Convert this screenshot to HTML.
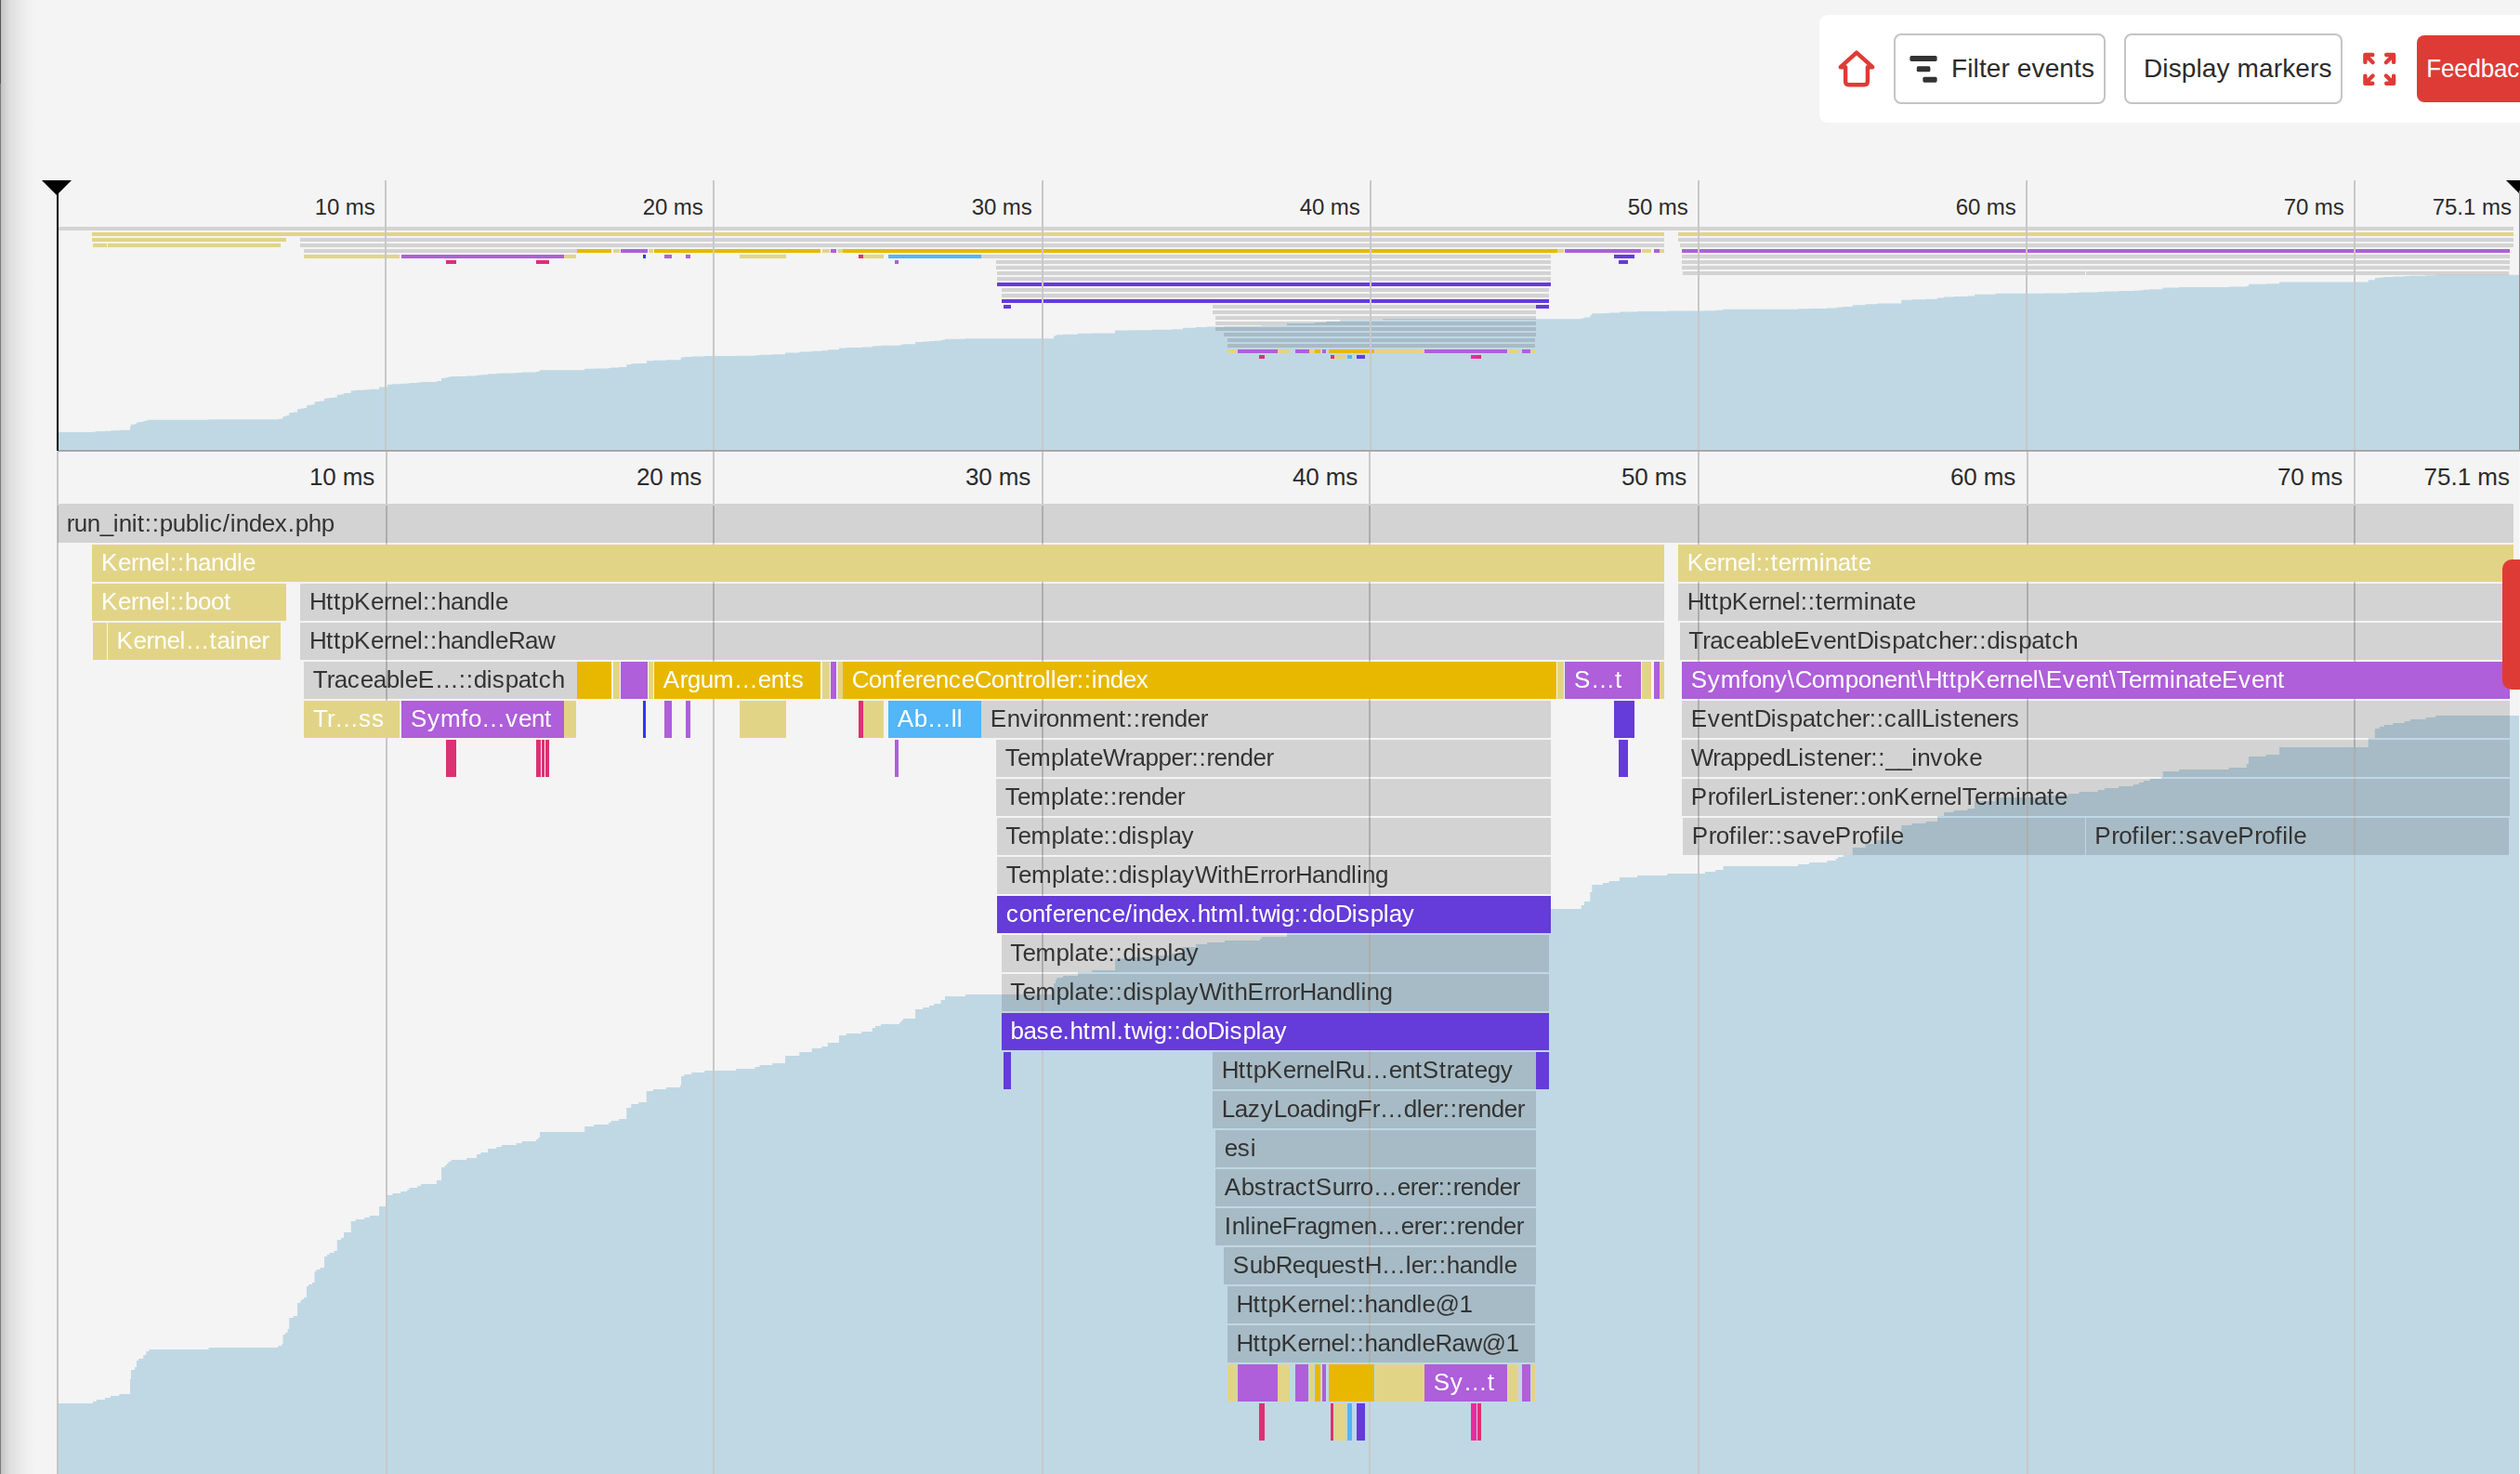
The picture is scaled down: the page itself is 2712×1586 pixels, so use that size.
<!DOCTYPE html>
<html lang="en"><head><meta charset="utf-8"><title>Timeline</title>
<style>
html,body{margin:0;padding:0}
body{width:2712px;height:1586px;overflow:hidden;background:#f4f4f4;position:relative;font-family:"Liberation Sans",sans-serif;color:#2f2f2f}
.a{position:absolute}
svg{position:absolute;left:0;top:0;overflow:hidden}
.b{position:absolute;height:40px}
.g{background:rgba(0,0,0,0.132)}
.ylw{background:#e2d487}.ylwf{background:rgba(226,212,135,.5)}.org{background:#e8b800}.pur{background:#ae5fd9}.ind{background:#653bd9}
.sky{background:#52b6f8}.pink{background:#dc3173}.mag{background:#f028a0}.blue{background:#2a3cf0}
.o{position:absolute;height:4px}
.gl{position:absolute;width:2px;background:#c8c8c8}
.t1{position:absolute;font-size:24px;line-height:28px;text-align:right;width:200px;top:209px;color:#2b2b2b}
.t2{position:absolute;font-size:26px;line-height:30px;text-align:right;width:200px;top:497.75px;color:#2b2b2b}
.btn{position:absolute;top:36px;height:76px;box-sizing:border-box;border:2px solid #c4c4c4;border-radius:8px;background:#fff;font-size:28px;line-height:72.6px;color:#2b2b2b;white-space:nowrap;letter-spacing:.12px}

</style></head><body>
<div class="a" style="left:0;top:0;width:42px;height:1586px;background:linear-gradient(to right,rgba(0,0,0,.21) 0,rgba(0,0,0,.16) 4px,rgba(0,0,0,.095) 10px,rgba(0,0,0,.05) 20px,rgba(0,0,0,.017) 30px,rgba(0,0,0,0) 40px)"></div>
<div class="a" style="left:0;top:0;width:1.3px;height:90px;background:#555"></div>
<div class="a" style="left:0;top:90px;width:1.3px;height:1496px;background:#7c7c7c"></div>
<svg width="2712" height="1586" viewBox="0 0 2712 1586">
<path fill="#c0d8e4" d="M63,484.5L63,465L100,465L100,464.54L103.75,464.54L103.75,464.09L113,464.09L113,463.63L119,463.63L119,463.17L128.25,463.17L128.25,462.71L140,462.71L140,459.05L141,459.05L141,456.77L145,456.77L145,456.08L147,456.08L147,454.48L149,454.48L149,454.02L154.25,454.02L154.25,453.11L157.25,453.11L157.25,452.19L160.25,452.19L160.25,451.73L224.5,451.73L224.5,451.28L299.25,451.28L299.25,450.82L303.25,450.82L303.25,450.36L304.5,450.36L304.5,448.07L307,448.07L307,447.62L309.5,447.62L309.5,446.7L311.25,446.7L311.25,443.96L315.5,443.96L315.5,443.5L320,443.5L320,440.3L323,440.3L323,439.84L324.5,439.84L324.5,439.38L327.25,439.38L327.25,438.92L330,438.92L330,436.18L332,436.18L332,435.72L336,435.72L336,435.27L338.5,435.27L338.5,432.52L340.5,432.52L340.5,432.06L344.5,432.06L344.5,431.61L349,431.61L349,428.86L352,428.86L352,428.4L354.5,428.4L354.5,427.95L359.5,427.95L359.5,427.49L362.75,427.49L362.75,424.74L367,424.74L367,424.29L370,424.29L370,422.91L377.75,422.91L377.75,420.17L382.75,420.17L382.75,419.71L392.25,419.71L392.25,419.25L397.75,419.25L397.75,418.8L408,418.8L408,416.51L417,416.51L417,413.76L422.5,413.76L422.5,413.31L431.25,413.31L431.25,412.85L438.25,412.85L438.25,412.39L440.5,412.39L440.5,411.94L449.25,411.94L449.25,411.48L453.25,411.48L453.25,411.02L470,411.02L470,410.11L475,410.11L475,406.9L478.75,406.9L478.75,406.45L480.75,406.45L480.75,405.99L482.5,405.99L482.5,405.53L485.5,405.53L485.5,405.07L502,405.07L502,404.62L513,404.62L513,403.7L517.5,403.7L517.5,403.24L525,403.24L525,402.33L534.25,402.33L534.25,401.87L540,401.87L540,401.41L555.75,401.41L555.75,400.96L561.75,400.96L561.75,400.5L577,400.5L577,400.04L579,400.04L579,399.58L581,399.58L581,398.21L629.25,398.21L629.25,396.84L639.25,396.84L639.25,396.38L655,396.38L655,395.92L657.5,395.92L657.5,395.47L666.25,395.47L666.25,395.01L674.25,395.01L674.25,392.26L679.25,392.26L679.25,391.35L687.25,391.35L687.25,390.89L695.75,390.89L695.75,388.15L703,388.15L703,387.69L717,387.69L717,387.23L732,387.23L732,386.77L733,386.77L733,384.49L736.25,384.49L736.25,384.03L744.25,384.03L744.25,383.57L758.25,383.57L758.25,383.12L792.25,383.12L792.25,382.66L812.5,382.66L812.5,382.2L817.5,382.2L817.5,381.74L831.25,381.74L831.25,381.29L845,381.29L845,379.46L860.25,379.46L860.25,378.54L873.75,378.54L873.75,377.63L884.25,377.63L884.25,377.17L890.75,377.17L890.75,376.25L903,376.25L903,374.42L910.75,374.42L910.75,373.97L927.25,373.97L927.25,373.51L938.75,373.51L938.75,372.59L942,372.59L942,372.14L948,372.14L948,371.68L968,371.68L968,371.22L970,371.22L970,370.76L972,370.76L972,370.31L985,370.31L985,368.02L993.25,368.02L993.25,367.56L1000,367.56L1000,367.1L1005,367.1L1005,366.65L1012.5,366.65L1012.5,365.73L1017,365.73L1017,364.82L1039,364.82L1039,364.36L1134,364.36L1134,361.61L1136,361.61L1136,360.7L1137.5,360.7L1137.5,360.24L1144,360.24L1144,359.78L1160,359.78L1160,358.87L1175,358.87L1175,358.41L1200,358.41L1200,355.55L1215,355.55L1215,355.21L1240,355.21L1240,354.75L1261,354.75L1261,354.3L1273,354.3L1273,352.69L1287,352.69L1287,352.01L1299,352.01L1299,351.55L1318,351.55L1318,351.09L1356,351.09L1356,350.64L1358,350.64L1358,350.18L1385,350.18L1385,348.12L1415,348.12L1415,346.98L1427,346.98L1427,345.83L1442,345.83L1442,344.23L1488,344.23L1488,343.32L1701.75,343.32L1701.75,342.4L1705,342.4L1705,341.49L1711.25,341.49L1711.25,339.2L1713.25,339.2L1713.25,337.37L1725,337.37L1725,336.91L1731.75,336.91L1731.75,336.45L1743,336.45L1743,335.54L1762,335.54L1762,335.08L1794.25,335.08L1794.25,334.62L1835,334.62L1835,334.17L1846.25,334.17L1846.25,333.71L1854.5,333.71L1854.5,332.8L1935,332.8L1935,332.34L1947,332.34L1947,331.88L1966.25,331.88L1966.25,331.42L1975.5,331.42L1975.5,330.97L1978,330.97L1978,330.51L1983.75,330.51L1983.75,330.05L1993.75,330.05L1993.75,328.22L2007.5,328.22L2007.5,327.31L2020,327.31L2020,326.39L2046.25,326.39L2046.25,322.73L2057.5,322.73L2057.5,322.27L2072.5,322.27L2072.5,321.82L2085,321.82L2085,320.44L2092,320.44L2092,319.53L2102.5,319.53L2102.5,319.07L2117.5,319.07L2117.5,318.61L2125,318.61L2125,316.78L2147.5,316.78L2147.5,315.87L2200,315.87L2200,315.41L2226,315.41L2226,314.95L2237.5,314.95L2237.5,314.5L2257.5,314.5L2257.5,314.04L2265,314.04L2265,313.58L2280,313.58L2280,313.12L2296,313.12L2296,312.67L2302,312.67L2302,312.21L2307,312.21L2307,311.75L2313.7,311.75L2313.7,311.29L2326,311.29L2326,310.84L2327.8,310.84L2327.8,309.46L2345,309.46L2345,309.01L2398.7,309.01L2398.7,308.55L2417.8,308.55L2417.8,307.63L2420,307.63L2420,305.81L2438.7,305.81L2438.7,305.35L2453,305.35L2453,303.52L2548.7,303.52L2548.7,301.23L2555.8,301.23L2555.8,298.94L2560.7,298.94L2560.7,298.49L2565.8,298.49L2565.8,298.03L2575.3,298.03L2575.3,297.57L2587.8,297.57L2587.8,297.11L2594,297.11L2594,296.66L2610.7,296.66L2610.7,296.2L2621.2,296.2L2621.2,295.74L2711,295.74L2711,484.5Z"/>
<path fill="#c0d8e4" d="M63,1600L63,1510L100,1510L100,1508L103.75,1508L103.75,1506L113,1506L113,1504L119,1504L119,1502L128.25,1502L128.25,1500L140,1500L140,1484L141,1484L141,1474L145,1474L145,1471L147,1471L147,1464L149,1464L149,1462L154.25,1462L154.25,1458L157.25,1458L157.25,1454L160.25,1454L160.25,1452L224.5,1452L224.5,1450L299.25,1450L299.25,1448L303.25,1448L303.25,1446L304.5,1446L304.5,1436L307,1436L307,1434L309.5,1434L309.5,1430L311.25,1430L311.25,1418L315.5,1418L315.5,1416L320,1416L320,1402L323,1402L323,1400L324.5,1400L324.5,1398L327.25,1398L327.25,1396L330,1396L330,1384L332,1384L332,1382L336,1382L336,1380L338.5,1380L338.5,1368L340.5,1368L340.5,1366L344.5,1366L344.5,1364L349,1364L349,1352L352,1352L352,1350L354.5,1350L354.5,1348L359.5,1348L359.5,1346L362.75,1346L362.75,1334L367,1334L367,1332L370,1332L370,1326L377.75,1326L377.75,1314L382.75,1314L382.75,1312L392.25,1312L392.25,1310L397.75,1310L397.75,1308L408,1308L408,1298L417,1298L417,1286L422.5,1286L422.5,1284L431.25,1284L431.25,1282L438.25,1282L438.25,1280L440.5,1280L440.5,1278L449.25,1278L449.25,1276L453.25,1276L453.25,1274L470,1274L470,1270L475,1270L475,1256L478.75,1256L478.75,1254L480.75,1254L480.75,1252L482.5,1252L482.5,1250L485.5,1250L485.5,1248L502,1248L502,1246L513,1246L513,1242L517.5,1242L517.5,1240L525,1240L525,1236L534.25,1236L534.25,1234L540,1234L540,1232L555.75,1232L555.75,1230L561.75,1230L561.75,1228L577,1228L577,1226L579,1226L579,1224L581,1224L581,1218L629.25,1218L629.25,1212L639.25,1212L639.25,1210L655,1210L655,1208L657.5,1208L657.5,1206L666.25,1206L666.25,1204L674.25,1204L674.25,1192L679.25,1192L679.25,1188L687.25,1188L687.25,1186L695.75,1186L695.75,1174L703,1174L703,1172L717,1172L717,1170L732,1170L732,1168L733,1168L733,1158L736.25,1158L736.25,1156L744.25,1156L744.25,1154L758.25,1154L758.25,1152L792.25,1152L792.25,1150L812.5,1150L812.5,1148L817.5,1148L817.5,1146L831.25,1146L831.25,1144L845,1144L845,1136L860.25,1136L860.25,1132L873.75,1132L873.75,1128L884.25,1128L884.25,1126L890.75,1126L890.75,1122L903,1122L903,1114L910.75,1114L910.75,1112L927.25,1112L927.25,1110L938.75,1110L938.75,1106L942,1106L942,1104L948,1104L948,1102L968,1102L968,1100L970,1100L970,1098L972,1098L972,1096L985,1096L985,1086L993.25,1086L993.25,1084L1000,1084L1000,1082L1005,1082L1005,1080L1012.5,1080L1012.5,1076L1017,1076L1017,1072L1039,1072L1039,1070L1134,1070L1134,1058L1136,1058L1136,1054L1137.5,1054L1137.5,1052L1144,1052L1144,1050L1160,1050L1160,1046L1175,1046L1175,1044L1200,1044L1200,1031.5L1215,1031.5L1215,1030L1240,1030L1240,1028L1261,1028L1261,1026L1273,1026L1273,1019L1287,1019L1287,1016L1299,1016L1299,1014L1318,1014L1318,1012L1356,1012L1356,1010L1358,1010L1358,1008L1385,1008L1385,999L1415,999L1415,994L1427,994L1427,989L1442,989L1442,982L1488,982L1488,978L1701.75,978L1701.75,974L1705,974L1705,970L1711.25,970L1711.25,960L1713.25,960L1713.25,952L1725,952L1725,950L1731.75,950L1731.75,948L1743,948L1743,944L1762,944L1762,942L1794.25,942L1794.25,940L1835,940L1835,938L1846.25,938L1846.25,936L1854.5,936L1854.5,932L1935,932L1935,930L1947,930L1947,928L1966.25,928L1966.25,926L1975.5,926L1975.5,924L1978,924L1978,922L1983.75,922L1983.75,920L1993.75,920L1993.75,912L2007.5,912L2007.5,908L2020,908L2020,904L2046.25,904L2046.25,888L2057.5,888L2057.5,886L2072.5,886L2072.5,884L2085,884L2085,878L2092,878L2092,874L2102.5,874L2102.5,872L2117.5,872L2117.5,870L2125,870L2125,862L2147.5,862L2147.5,858L2200,858L2200,856L2226,856L2226,854L2237.5,854L2237.5,852L2257.5,852L2257.5,850L2265,850L2265,848L2280,848L2280,846L2296,846L2296,844L2302,844L2302,842L2307,842L2307,840L2313.7,840L2313.7,838L2326,838L2326,836L2327.8,836L2327.8,830L2345,830L2345,828L2398.7,828L2398.7,826L2417.8,826L2417.8,822L2420,822L2420,814L2438.7,814L2438.7,812L2453,812L2453,804L2548.7,804L2548.7,794L2555.8,794L2555.8,784L2560.7,784L2560.7,782L2565.8,782L2565.8,780L2575.3,780L2575.3,778L2587.8,778L2587.8,776L2594,776L2594,774L2610.7,774L2610.7,772L2621.2,772L2621.2,770L2711,770L2711,1600Z"/>
</svg>
<div class="gl" style="left:415px;top:486px;height:1100px"></div>
<div class="gl" style="left:767px;top:486px;height:1100px"></div>
<div class="gl" style="left:1121px;top:486px;height:1100px"></div>
<div class="gl" style="left:1473px;top:486px;height:1100px"></div>
<div class="gl" style="left:1827px;top:486px;height:1100px"></div>
<div class="gl" style="left:2181px;top:486px;height:1100px"></div>
<div class="gl" style="left:2533px;top:486px;height:1100px"></div>
<div class="gl" style="left:61px;top:486px;height:1100px;background:#c6c6c6"></div>
<div class="o g" style="left:62px;top:244px;width:2642.5px"></div>
<div class="o ylw" style="left:99.25px;top:250px;width:1691.25px"></div>
<div class="o ylw" style="left:1806px;top:250px;width:898.5px"></div>
<div class="o ylw" style="left:99.25px;top:256px;width:208.75px"></div>
<div class="o g" style="left:323.25px;top:256px;width:1467.25px"></div>
<div class="o g" style="left:1806px;top:256px;width:898.5px"></div>
<div class="o ylw" style="left:99.5px;top:262px;width:15.5px"></div>
<div class="o ylw" style="left:115.75px;top:262px;width:186.25px"></div>
<div class="o g" style="left:323.25px;top:262px;width:1467.25px"></div>
<div class="o g" style="left:1807.5px;top:262px;width:897px"></div>
<div class="o g" style="left:327px;top:268px;width:293.5px"></div>
<div class="o org" style="left:621px;top:268px;width:36.75px"></div>
<div class="o ylw" style="left:660px;top:268px;width:7px"></div>
<div class="o pur" style="left:668px;top:268px;width:29.25px"></div>
<div class="o ylw" style="left:698px;top:268px;width:5.1px"></div>
<div class="o org" style="left:704px;top:268px;width:178.75px"></div>
<div class="o ylw" style="left:885px;top:268px;width:8px"></div>
<div class="o pur" style="left:894.25px;top:268px;width:5.75px"></div>
<div class="o ylwf" style="left:900.75px;top:268px;width:1.25px"></div>
<div class="o ylw" style="left:902px;top:268px;width:5px"></div>
<div class="o org" style="left:907px;top:268px;width:768.5px"></div>
<div class="o ylw" style="left:1675.5px;top:268px;width:7.5px"></div>
<div class="o pur" style="left:1684.25px;top:268px;width:81.5px"></div>
<div class="o ylw" style="left:1767px;top:268px;width:10px"></div>
<div class="o pur" style="left:1780px;top:268px;width:6.25px"></div>
<div class="o ylw" style="left:1786.25px;top:268px;width:4.25px"></div>
<div class="o pur" style="left:1810px;top:268px;width:890.75px"></div>
<div class="o ylw" style="left:327.25px;top:274px;width:102.75px"></div>
<div class="o pur" style="left:432.25px;top:274px;width:175px"></div>
<div class="o ylw" style="left:607.25px;top:274px;width:13px"></div>
<div class="o blue" style="left:691.5px;top:274px;width:3.5px"></div>
<div class="o pur" style="left:715px;top:274px;width:8px"></div>
<div class="o pur" style="left:737.75px;top:274px;width:5.25px"></div>
<div class="o ylw" style="left:796.25px;top:274px;width:49.75px"></div>
<div class="o pink" style="left:924.25px;top:274px;width:4.75px"></div>
<div class="o ylw" style="left:929px;top:274px;width:21.5px"></div>
<div class="o sky" style="left:956px;top:274px;width:99.75px"></div>
<div class="o g" style="left:1056px;top:274px;width:612.75px"></div>
<div class="o ind" style="left:1737px;top:274px;width:22px"></div>
<div class="o g" style="left:1810px;top:274px;width:890.75px"></div>
<div class="o pink" style="left:480px;top:280px;width:10.75px"></div>
<div class="o pink" style="left:577px;top:280px;width:5.5px"></div>
<div class="o pink" style="left:582.5px;top:280px;width:4px"></div>
<div class="o pink" style="left:586.5px;top:280px;width:4.5px"></div>
<div class="o pur" style="left:963px;top:280px;width:4px"></div>
<div class="o g" style="left:1072px;top:280px;width:596.75px"></div>
<div class="o ind" style="left:1742px;top:280px;width:9.75px"></div>
<div class="o g" style="left:1810px;top:280px;width:890.75px"></div>
<div class="o g" style="left:1072px;top:286px;width:596.75px"></div>
<div class="o g" style="left:1810px;top:286px;width:890.75px"></div>
<div class="o g" style="left:1072.5px;top:292px;width:596.25px"></div>
<div class="o g" style="left:1811px;top:292px;width:433px"></div>
<div class="o g" style="left:2244.5px;top:292px;width:455.5px"></div>
<div class="o g" style="left:1073px;top:298px;width:595.5px"></div>
<div class="o ind" style="left:1073px;top:304px;width:595.5px"></div>
<div class="o g" style="left:1077.5px;top:310px;width:589.5px"></div>
<div class="o g" style="left:1077.5px;top:316px;width:589.5px"></div>
<div class="o ind" style="left:1077.75px;top:322px;width:589.25px"></div>
<div class="o ind" style="left:1080px;top:328px;width:8.25px"></div>
<div class="o g" style="left:1305px;top:328px;width:348.25px"></div>
<div class="o ind" style="left:1653.25px;top:328px;width:9.15px"></div>
<div class="o ind" style="left:1662.4px;top:328px;width:4.35px"></div>
<div class="o g" style="left:1305px;top:334px;width:347.75px"></div>
<div class="o g" style="left:1308px;top:340px;width:344.75px"></div>
<div class="o g" style="left:1308px;top:346px;width:344.5px"></div>
<div class="o g" style="left:1308px;top:352px;width:344.5px"></div>
<div class="o g" style="left:1317px;top:358px;width:335.5px"></div>
<div class="o g" style="left:1320.75px;top:364px;width:331.5px"></div>
<div class="o g" style="left:1320.75px;top:370px;width:331.5px"></div>
<div class="o ylw" style="left:1321.25px;top:376px;width:10px"></div>
<div class="o pur" style="left:1332px;top:376px;width:43.25px"></div>
<div class="o ylw" style="left:1375.25px;top:376px;width:13px"></div>
<div class="o pur" style="left:1394px;top:376px;width:14.5px"></div>
<div class="o ylw" style="left:1408.5px;top:376px;width:6px"></div>
<div class="o org" style="left:1414.5px;top:376px;width:6px"></div>
<div class="o pur" style="left:1422.75px;top:376px;width:4px"></div>
<div class="o org" style="left:1430px;top:376px;width:48.5px"></div>
<div class="o ylw" style="left:1480px;top:376px;width:52.5px"></div>
<div class="o pur" style="left:1533px;top:376px;width:88.75px"></div>
<div class="o ylw" style="left:1623px;top:376px;width:10.5px"></div>
<div class="o pur" style="left:1638px;top:376px;width:8.75px"></div>
<div class="o ylw" style="left:1647.5px;top:376px;width:4.75px"></div>
<div class="o pink" style="left:1355px;top:382px;width:5.5px"></div>
<div class="o pink" style="left:1432px;top:382px;width:3.5px"></div>
<div class="o ylw" style="left:1435.5px;top:382px;width:13.5px"></div>
<div class="o sky" style="left:1450px;top:382px;width:5px"></div>
<div class="o ind" style="left:1460px;top:382px;width:8.75px"></div>
<div class="o mag" style="left:1582.75px;top:382px;width:6.75px"></div>
<div class="o pink" style="left:1589.5px;top:382px;width:4.5px"></div>
<div class="gl" style="left:414px;top:194px;height:292px"></div>
<div class="gl" style="left:767px;top:194px;height:292px"></div>
<div class="gl" style="left:1121px;top:194px;height:292px"></div>
<div class="gl" style="left:1474px;top:194px;height:292px"></div>
<div class="gl" style="left:1827px;top:194px;height:292px"></div>
<div class="gl" style="left:2180px;top:194px;height:292px"></div>
<div class="gl" style="left:2533px;top:194px;height:292px"></div>
<div class="a" style="left:62px;top:484px;width:2650px;height:2px;background:#a9a7a7"></div>
<div class="a" style="left:61px;top:200px;width:2px;height:285px;background:#000"></div>
<svg width="2712" height="1586" viewBox="0 0 2712 1586"><path d="M45,194H77L61,210Z" fill="#000"/><path d="M2697,194H2729L2713,210Z" fill="#000"/><rect x="2711" y="205" width="1" height="279" fill="#8a8a8a"/></svg>
<div class="t1" style="left:203.7px;letter-spacing:-0.07px">10 ms</div>
<div class="t2" style="left:203px;letter-spacing:-0.16px">10 ms</div>
<div class="t1" style="left:556.7px;letter-spacing:-0.07px">20 ms</div>
<div class="t2" style="left:555px;letter-spacing:-0.16px">20 ms</div>
<div class="t1" style="left:910.7px;letter-spacing:-0.07px">30 ms</div>
<div class="t2" style="left:909px;letter-spacing:-0.16px">30 ms</div>
<div class="t1" style="left:1263.7px;letter-spacing:-0.07px">40 ms</div>
<div class="t2" style="left:1261px;letter-spacing:-0.16px">40 ms</div>
<div class="t1" style="left:1616.7px;letter-spacing:-0.07px">50 ms</div>
<div class="t2" style="left:1615px;letter-spacing:-0.16px">50 ms</div>
<div class="t1" style="left:1969.7px;letter-spacing:-0.07px">60 ms</div>
<div class="t2" style="left:1969px;letter-spacing:-0.16px">60 ms</div>
<div class="t1" style="left:2322.7px;letter-spacing:-0.07px">70 ms</div>
<div class="t2" style="left:2321px;letter-spacing:-0.16px">70 ms</div>
<div class="t1" style="left:2503px">75.1 ms</div>
<div class="t2" style="left:2501px">75.1 ms</div>
<div class="a" style="left:62px;top:542px;width:2642.5px;height:2px;background:#d3d3d3"></div>
<div class="a" style="left:0;top:0;width:2712px;height:1586px;will-change:transform">
<div class="b g" style="left:62px;top:544px;width:2642.5px"></div>
<div class="b ylw" style="left:99.25px;top:586px;width:1691.25px"></div>
<div class="b ylw" style="left:1806px;top:586px;width:898.5px"></div>
<div class="b ylw" style="left:99.25px;top:628px;width:208.75px"></div>
<div class="b g" style="left:323.25px;top:628px;width:1467.25px"></div>
<div class="b g" style="left:1806px;top:628px;width:898.5px"></div>
<div class="b ylw" style="left:99.5px;top:670px;width:15.5px"></div>
<div class="b ylw" style="left:115.75px;top:670px;width:186.25px"></div>
<div class="b g" style="left:323.25px;top:670px;width:1467.25px"></div>
<div class="b g" style="left:1807.5px;top:670px;width:897px"></div>
<div class="b g" style="left:327px;top:712px;width:293.5px"></div>
<div class="b org" style="left:621px;top:712px;width:36.75px"></div>
<div class="b ylw" style="left:660px;top:712px;width:7px"></div>
<div class="b pur" style="left:668px;top:712px;width:29.25px"></div>
<div class="b ylw" style="left:698px;top:712px;width:5.1px"></div>
<div class="b org" style="left:704px;top:712px;width:178.75px"></div>
<div class="b ylw" style="left:885px;top:712px;width:8px"></div>
<div class="b pur" style="left:894.25px;top:712px;width:5.75px"></div>
<div class="b ylwf" style="left:900.75px;top:712px;width:0.85px"></div>
<div class="b ylw" style="left:902px;top:712px;width:4.8px"></div>
<div class="b org" style="left:907px;top:712px;width:768px"></div>
<div class="b ylw" style="left:1675.5px;top:712px;width:7.5px"></div>
<div class="b pur" style="left:1684.25px;top:712px;width:81.5px"></div>
<div class="b ylw" style="left:1767px;top:712px;width:10px"></div>
<div class="b pur" style="left:1780px;top:712px;width:5.75px"></div>
<div class="b ylw" style="left:1786.25px;top:712px;width:4.25px"></div>
<div class="b pur" style="left:1810px;top:712px;width:890.75px"></div>
<div class="b ylw" style="left:327.25px;top:754px;width:102.75px"></div>
<div class="b pur" style="left:432.25px;top:754px;width:174.5px"></div>
<div class="b ylw" style="left:607.25px;top:754px;width:13px"></div>
<div class="b blue" style="left:691.5px;top:754px;width:3.5px"></div>
<div class="b pur" style="left:715px;top:754px;width:8px"></div>
<div class="b pur" style="left:737.75px;top:754px;width:5.25px"></div>
<div class="b ylw" style="left:796.25px;top:754px;width:49.75px"></div>
<div class="b pink" style="left:924.25px;top:754px;width:4.65px"></div>
<div class="b ylw" style="left:929px;top:754px;width:21.5px"></div>
<div class="b sky" style="left:956px;top:754px;width:99.75px"></div>
<div class="b g" style="left:1056px;top:754px;width:612.75px"></div>
<div class="b ind" style="left:1737px;top:754px;width:22px"></div>
<div class="b g" style="left:1810px;top:754px;width:890.75px"></div>
<div class="b pink" style="left:480px;top:796px;width:10.75px"></div>
<div class="b pink" style="left:577px;top:796px;width:5px"></div>
<div class="b pink" style="left:582.5px;top:796px;width:3.5px"></div>
<div class="b pink" style="left:586.5px;top:796px;width:4.5px"></div>
<div class="b pur" style="left:963px;top:796px;width:4px"></div>
<div class="b g" style="left:1072px;top:796px;width:596.75px"></div>
<div class="b ind" style="left:1742px;top:796px;width:9.75px"></div>
<div class="b g" style="left:1810px;top:796px;width:890.75px"></div>
<div class="b g" style="left:1072px;top:838px;width:596.75px"></div>
<div class="b g" style="left:1810px;top:838px;width:890.75px"></div>
<div class="b g" style="left:1072.5px;top:880px;width:596.25px"></div>
<div class="b g" style="left:1811px;top:880px;width:433px"></div>
<div class="b g" style="left:2244.5px;top:880px;width:455.5px"></div>
<div class="b g" style="left:1073px;top:922px;width:595.5px"></div>
<div class="b ind" style="left:1073px;top:964px;width:595.5px"></div>
<div class="b g" style="left:1077.5px;top:1006px;width:589.5px"></div>
<div class="b g" style="left:1077.5px;top:1048px;width:589.5px"></div>
<div class="b ind" style="left:1077.75px;top:1090px;width:589.25px"></div>
<div class="b ind" style="left:1080px;top:1132px;width:8.25px"></div>
<div class="b g" style="left:1305px;top:1132px;width:347.75px"></div>
<div class="b ind" style="left:1653.25px;top:1132px;width:8.85px"></div>
<div class="b ind" style="left:1662.4px;top:1132px;width:4.35px"></div>
<div class="b g" style="left:1305px;top:1174px;width:347.75px"></div>
<div class="b g" style="left:1308px;top:1216px;width:344.75px"></div>
<div class="b g" style="left:1308px;top:1258px;width:344.5px"></div>
<div class="b g" style="left:1308px;top:1300px;width:344.5px"></div>
<div class="b g" style="left:1317px;top:1342px;width:335.5px"></div>
<div class="b g" style="left:1320.75px;top:1384px;width:331.5px"></div>
<div class="b g" style="left:1320.75px;top:1426px;width:331.5px"></div>
<div class="b ylw" style="left:1321.25px;top:1468px;width:10px"></div>
<div class="b pur" style="left:1332px;top:1468px;width:43px"></div>
<div class="b ylw" style="left:1375.25px;top:1468px;width:13px"></div>
<div class="b pur" style="left:1394px;top:1468px;width:14.25px"></div>
<div class="b ylw" style="left:1408.5px;top:1468px;width:5.75px"></div>
<div class="b org" style="left:1414.5px;top:1468px;width:6px"></div>
<div class="b pur" style="left:1422.75px;top:1468px;width:4px"></div>
<div class="b org" style="left:1430px;top:1468px;width:48.5px"></div>
<div class="b ylw" style="left:1480px;top:1468px;width:52.5px"></div>
<div class="b pur" style="left:1533px;top:1468px;width:88.75px"></div>
<div class="b ylw" style="left:1623px;top:1468px;width:10.5px"></div>
<div class="b pur" style="left:1638px;top:1468px;width:8.75px"></div>
<div class="b ylw" style="left:1647.5px;top:1468px;width:4.75px"></div>
<div class="b pink" style="left:1355px;top:1510px;width:5.5px"></div>
<div class="b pink" style="left:1432px;top:1510px;width:3.25px"></div>
<div class="b ylw" style="left:1435.5px;top:1510px;width:13.5px"></div>
<div class="b sky" style="left:1450px;top:1510px;width:5px"></div>
<div class="b ind" style="left:1460px;top:1510px;width:8.75px"></div>
<div class="b mag" style="left:1582.75px;top:1510px;width:6.5px"></div>
<div class="b pink" style="left:1589.5px;top:1510px;width:4.5px"></div>
<svg width="2712" height="1586" viewBox="0 0 2712 1586" style="font-size:26px" fill="#fff">
<text y="571.9" x="71.75 79.75 93.75 107.75 121.75 127.75 141.75 147.75 155.75 163.75 171.75 185.75 199.75 213.75 219.75 225.75 239.75 247.75 253.75 267.75 281.75 295.75 309.75 317.75 331.75 345.75" fill="#333">run_init::public/index.php</text>
<text y="613.9" x="109 127 141 149 163 177 183 191 199 213 227 241 255 261">Kernel::handle</text>
<text y="613.9" x="1815.75 1833.75 1847.75 1855.75 1869.75 1883.75 1889.75 1897.75 1905.75 1913.75 1927.75 1935.75 1957.75 1963.75 1977.75 1991.75 1999.75">Kernel::terminate</text>
<text y="655.9" x="109 127 141 149 163 177 183 191 199 213 227 241">Kernel::boot</text>
<text y="655.9" x="333 351 359 367 381 399 413 421 435 449 455 463 471 485 499 513 527 533" fill="#333">HttpKernel::handle</text>
<text y="655.9" x="1815.75 1833.75 1841.75 1849.75 1863.75 1881.75 1895.75 1903.75 1917.75 1931.75 1937.75 1945.75 1953.75 1961.75 1975.75 1983.75 2005.75 2011.75 2025.75 2039.75 2047.75" fill="#333">HttpKernel::terminate</text>
<text y="697.9" x="125.5 143.5 157.5 165.5 179.5 193.5 199.5 225.5 233.5 247.5 253.5 267.5 281.5">Kernel…tainer</text>
<text y="697.9" x="333 351 359 367 381 399 413 421 435 449 455 463 471 485 499 513 527 533 547 565 579" fill="#333">HttpKernel::handleRaw</text>
<text y="697.9" x="1817.25 1832.28 1840.28 1854.28 1868.28 1882.28 1896.28 1910.28 1916.28 1930.28 1948.28 1962.28 1976.28 1990.28 1998.28 2016.28 2022.28 2036.28 2050.28 2064.28 2072.28 2086.28 2100.28 2114.28 2122.28 2130.28 2138.28 2152.28 2158.28 2172.28 2186.28 2200.28 2208.28 2222.28" fill="#333">TraceableEventDispatcher::dispatch</text>
<text y="739.9" x="336.75 351.78 359.78 373.78 387.78 401.78 415.78 429.78 435.78 449.78 467.78 493.78 501.78 509.78 523.78 529.78 543.78 557.78 571.78 579.78 593.78" fill="#333">TraceableE…::dispatch</text>
<text y="739.9" x="713.75 731.75 739.75 753.75 767.75 789.75 815.75 829.75 843.75 851.75">Argum…ents</text>
<text y="739.9" x="916.75 934.75 948.75 962.75 970.75 984.75 992.75 1006.75 1020.75 1034.75 1048.75 1066.75 1080.75 1094.75 1102.75 1110.75 1124.75 1130.75 1136.75 1150.75 1158.75 1166.75 1174.75 1180.75 1194.75 1208.75 1222.75">ConferenceController::index</text>
<text y="739.9" x="1694 1712 1738">S…t</text>
<text y="739.9" x="1819.75 1837.75 1851.75 1873.75 1881.75 1895.75 1909.75 1923.75 1931.75 1949.75 1963.75 1985.75 1999.75 2013.75 2027.75 2041.75 2055.75 2063.75 2071.75 2089.75 2097.75 2105.75 2119.75 2137.75 2151.75 2159.75 2173.75 2187.75 2193.75 2201.75 2219.75 2233.75 2247.75 2261.75 2269.75 2277.75 2290.88 2304.88 2312.88 2334.88 2340.88 2354.88 2368.88 2376.88 2390.88 2408.88 2422.88 2436.88 2450.88">Symfony\Component\HttpKernel\Event\TerminateEvent</text>
<text y="781.9" x="337 352.03 360.03 386.03 400.03">Tr…ss</text>
<text y="781.9" x="442 460 474 496 504 518 544 558 572 586">Symfo…vent</text>
<text y="781.9" x="965.75 983.75 997.75 1023.75 1029.75">Ab…ll</text>
<text y="781.9" x="1065.75 1083.75 1097.75 1111.75 1117.75 1125.75 1139.75 1153.75 1175.75 1189.75 1203.75 1211.75 1219.75 1227.75 1235.75 1249.75 1263.75 1277.75 1291.75" fill="#333">Environment::render</text>
<text y="781.9" x="1819.75 1837.75 1851.75 1865.75 1879.75 1887.75 1905.75 1911.75 1925.75 1939.75 1953.75 1961.75 1975.75 1989.75 2003.75 2011.75 2019.75 2027.75 2041.75 2055.75 2061.75 2067.75 2081.75 2087.75 2101.75 2109.75 2123.75 2137.75 2151.75 2159.75" fill="#333">EventDispatcher::callListeners</text>
<text y="823.9" x="1081.75 1094.88 1108.88 1130.88 1144.88 1150.88 1164.88 1172.88 1186.88 1210.41 1218.41 1232.41 1246.41 1260.41 1274.41 1282.41 1290.41 1298.41 1306.41 1320.41 1334.41 1348.41 1362.41" fill="#333">TemplateWrapper::render</text>
<text y="823.9" x="1819.75 1843.28 1851.28 1865.28 1879.28 1893.28 1907.28 1921.28 1935.28 1941.28 1955.28 1963.28 1977.28 1991.28 2005.28 2013.28 2021.28 2029.28 2043.28 2057.28 2063.28 2077.28 2091.28 2105.28 2119.28" fill="#333">WrappedListener::__invoke</text>
<text y="865.9" x="1081.75 1094.88 1108.88 1130.88 1144.88 1150.88 1164.88 1172.88 1186.88 1194.88 1202.88 1210.88 1224.88 1238.88 1252.88 1266.88" fill="#333">Template::render</text>
<text y="865.9" x="1819.75 1837.75 1845.75 1859.75 1867.75 1873.75 1879.75 1893.75 1901.75 1915.75 1921.75 1935.75 1943.75 1957.75 1971.75 1985.75 1993.75 2001.75 2009.75 2023.75 2037.75 2055.75 2069.75 2077.75 2091.75 2105.75 2111.75 2124.88 2138.88 2146.88 2168.88 2174.88 2188.88 2202.88 2210.88" fill="#333">ProfilerListener::onKernelTerminate</text>
<text y="907.9" x="1082.25 1095.38 1109.38 1131.38 1145.38 1151.38 1165.38 1173.38 1187.38 1195.38 1203.38 1217.38 1223.38 1237.38 1251.38 1257.38 1271.38" fill="#333">Template::display</text>
<text y="907.9" x="1820.75 1838.75 1846.75 1860.75 1868.75 1874.75 1880.75 1894.75 1902.75 1910.75 1918.75 1932.75 1946.75 1960.75 1974.75 1992.75 2000.75 2014.75 2022.75 2028.75 2034.75" fill="#333">Profiler::saveProfile</text>
<text y="907.9" x="2254.25 2272.25 2280.25 2294.25 2302.25 2308.25 2314.25 2328.25 2336.25 2344.25 2352.25 2366.25 2380.25 2394.25 2408.25 2426.25 2434.25 2448.25 2456.25 2462.25 2468.25" fill="#333">Profiler::saveProfile</text>
<text y="949.9" x="1082.75 1095.88 1109.88 1131.88 1145.88 1151.88 1165.88 1173.88 1187.88 1195.88 1203.88 1217.88 1223.88 1237.88 1251.88 1257.88 1271.88 1285.88 1309.88 1315.88 1323.88 1337.88 1355.88 1363.88 1371.88 1385.88 1393.88 1411.88 1425.88 1439.88 1453.88 1459.88 1465.88 1479.88" fill="#333">Template::displayWithErrorHandling</text>
<text y="991.9" x="1082.75 1096.75 1110.75 1124.75 1132.75 1146.75 1154.75 1168.75 1182.75 1196.75 1210.75 1218.75 1224.75 1238.75 1252.75 1266.75 1280.75 1288.75 1302.75 1310.75 1332.75 1338.75 1346.75 1354.75 1372.75 1378.75 1392.75 1400.75 1408.75 1422.75 1436.75 1454.75 1460.75 1474.75 1488.75 1494.75 1508.75">conference/index.html.twig::doDisplay</text>
<text y="1033.9" x="1087.25 1100.38 1114.38 1136.38 1150.38 1156.38 1170.38 1178.38 1192.38 1200.38 1208.38 1222.38 1228.38 1242.38 1256.38 1262.38 1276.38" fill="#333">Template::display</text>
<text y="1075.9" x="1087.25 1100.38 1114.38 1136.38 1150.38 1156.38 1170.38 1178.38 1192.38 1200.38 1208.38 1222.38 1228.38 1242.38 1256.38 1262.38 1276.38 1290.38 1314.38 1320.38 1328.38 1342.38 1360.38 1368.38 1376.38 1390.38 1398.38 1416.38 1430.38 1444.38 1458.38 1464.38 1470.38 1484.38" fill="#333">Template::displayWithErrorHandling</text>
<text y="1117.9" x="1087.5 1101.5 1115.5 1129.5 1143.5 1151.5 1165.5 1173.5 1195.5 1201.5 1209.5 1217.5 1235.5 1241.5 1255.5 1263.5 1271.5 1285.5 1299.5 1317.5 1323.5 1337.5 1351.5 1357.5 1371.5">base.html.twig::doDisplay</text>
<text y="1159.9" x="1314.75 1332.75 1340.75 1348.75 1362.75 1380.75 1394.75 1402.75 1416.75 1430.75 1436.75 1454.75 1468.75 1494.75 1508.75 1522.75 1530.75 1548.75 1556.75 1564.75 1578.75 1586.75 1600.75 1614.75" fill="#333">HttpKernelRu…entStrategy</text>
<text y="1201.9" x="1314.75 1328.75 1342.75 1356.75 1370.75 1384.75 1398.75 1412.75 1426.75 1432.75 1446.75 1460.75 1476.75 1484.75 1510.75 1524.75 1530.75 1544.75 1552.75 1560.75 1568.75 1576.75 1590.75 1604.75 1618.75 1632.75" fill="#333">LazyLoadingFr…dler::render</text>
<text y="1243.9" x="1317.75 1331.75 1345.75" fill="#333">esi</text>
<text y="1285.9" x="1317.75 1335.75 1349.75 1363.75 1371.75 1379.75 1393.75 1407.75 1415.75 1433.75 1447.75 1455.75 1463.75 1477.75 1503.75 1517.75 1525.75 1539.75 1547.75 1555.75 1563.75 1571.75 1585.75 1599.75 1613.75 1627.75" fill="#333">AbstractSurro…erer::render</text>
<text y="1327.9" x="1317.75 1325.75 1339.75 1345.75 1351.75 1365.75 1379.75 1395.75 1403.75 1417.75 1431.75 1453.75 1467.75 1481.75 1507.75 1521.75 1529.75 1543.75 1551.75 1559.75 1567.75 1575.75 1589.75 1603.75 1617.75 1631.75" fill="#333">InlineFragmen…erer::render</text>
<text y="1369.9" x="1326.75 1344.75 1358.75 1372.75 1390.75 1404.75 1418.75 1432.75 1446.75 1460.75 1468.75 1486.75 1512.75 1518.75 1532.75 1540.75 1548.75 1556.75 1570.75 1584.75 1598.75 1612.75 1618.75" fill="#333">SubRequestH…ler::handle</text>
<text y="1411.9" x="1330.5 1348.5 1356.5 1364.5 1378.5 1396.5 1410.5 1418.5 1432.5 1446.5 1452.5 1460.5 1468.5 1482.5 1496.5 1510.5 1524.5 1530.5 1544.5 1570.5" fill="#333">HttpKernel::handle@1</text>
<text y="1453.9" x="1330.5 1348.5 1356.5 1364.5 1378.5 1396.5 1410.5 1418.5 1432.5 1446.5 1452.5 1460.5 1468.5 1482.5 1496.5 1510.5 1524.5 1530.5 1544.5 1562.5 1576.5 1594.5 1620.5" fill="#333">HttpKernel::handleRaw@1</text>
<text y="1495.9" x="1542.75 1560.75 1574.75 1600.75">Sy…t</text>
</svg>
</div>
<div class="a" style="left:2710.7px;top:486px;width:2px;height:1100px;background:#f8f8f8"></div>
<div class="a" style="left:2693px;top:602px;width:40px;height:140px;background:#df3b36;border-radius:10px 0 0 10px"></div>
<div class="a" style="left:1958px;top:16px;width:800px;height:116px;background:#fff;border-radius:9px"></div>
<div class="btn" style="left:2038px;width:228px;padding-left:60px">Filter events</div>
<div class="btn" style="left:2286px;width:235px;padding-left:19px">Display markers</div>
<svg width="2712" height="160" viewBox="0 0 2712 160"><path d="M1980.8,72.2L1998,56.6L2015.2,72.2H2009.9V87.6Q2009.9,91.3 2006.2,91.3H1989.8Q1986.1,91.3 1986.1,87.6V72.2Z" fill="none" stroke="#df3b36" stroke-width="4.4" stroke-linejoin="round" stroke-linecap="round"/><g fill="#333"><rect x="2055.4" y="59.9" width="29.2" height="6" rx="1.6"/><rect x="2062.8" y="71.3" width="14.6" height="6" rx="1.6"/><rect x="2069.4" y="82.7" width="15.2" height="6" rx="1.6"/></g><g fill="none" stroke="#df3b36" stroke-width="4.4" stroke-linecap="round" stroke-linejoin="round"><path d="M2553.3,59H2545.4V66.9M2545.4,59L2553.6,67.2"/><path d="M2568.2,59H2576.1V66.9M2576.1,59L2567.9,67.2"/><path d="M2553.3,89.7H2545.4V81.8M2545.4,89.7L2553.6,81.5"/><path d="M2568.2,89.7H2576.1V81.8M2576.1,89.7L2567.9,81.5"/></g></svg>
<div class="a" style="left:2601px;top:38px;width:140px;height:72px;background:#df3b36;border-radius:8px;color:#fff;font-size:26px;line-height:72px;letter-spacing:-.21px;box-sizing:border-box;padding-left:10.3px;white-space:nowrap;overflow:hidden"><span style="display:inline-block;transform:scaleY(1.045);transform-origin:0 62%">Feedback</span></div>
</body></html>
